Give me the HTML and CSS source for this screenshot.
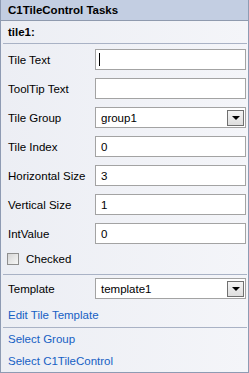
FILE: index.html
```html
<!DOCTYPE html>
<html lang="en">
<head>
    <meta charset="UTF-8">
    <title>C1TileControl Tasks</title>
    <link rel="stylesheet" href="styles.css">
</head>
<body>

<div class="panel">
    <div class="panel-header">C1TileControl Tasks</div>

    <div class="section-title">tile1:</div>
    <div class="divider"></div>

    <div class="props">
        <div class="row">
            <span class="label">Tile Text</span>
            <div class="field"><span class="caret"></span></div>
        </div>
        <div class="row">
            <span class="label">ToolTip Text</span>
            <div class="field"></div>
        </div>
        <div class="row">
            <span class="label">Tile Group</span>
            <div class="field combo">group1<span class="drop"></span></div>
        </div>
        <div class="row">
            <span class="label">Tile Index</span>
            <div class="field">0</div>
        </div>
        <div class="row">
            <span class="label">Horizontal Size</span>
            <div class="field">3</div>
        </div>
        <div class="row">
            <span class="label">Vertical Size</span>
            <div class="field">1</div>
        </div>
        <div class="row">
            <span class="label">IntValue</span>
            <div class="field">0</div>
        </div>
        <div class="check-row">
            <span class="checkbox"></span>
            <span>Checked</span>
        </div>
    </div>

    <div class="divider"></div>

    <div class="row template-row">
        <span class="label">Template</span>
        <div class="field combo">template1<span class="drop"></span></div>
    </div>
    <a class="action" href="#">Edit Tile Template</a>

    <div class="divider"></div>

    <a class="action" href="#">Select Group</a>
    <a class="action" href="#">Select C1TileControl</a>
</div>

</body>
</html>
```

FILE: styles.css
```css
body {
    margin: 0;
    font-family: "Segoe UI", "Liberation Sans", Arial, sans-serif;
    font-size: 11.5px;
    color: #000;
}
.panel {
    width: 249px;
    height: 373px;
    box-sizing: border-box;
    border: 1px solid #8e9bb3;
    border-top: none;
    background: linear-gradient(to right, #eceef4, #f4f5f9);
    display: flex;
    flex-direction: column;
}
.panel-header {
    height: 21px;
    box-sizing: border-box;
    background-color: #c3cee2;
    border-bottom: 1px solid #8f9aae;
    padding-left: 7px;
    font-weight: bold;
    line-height: 20px;
}
.section-title {
    height: 22px;
    padding-left: 7px;
    font-weight: bold;
    line-height: 23px;
}
.divider {
    height: 1px;
    margin: 0 1px 0 2px;
    background-color: #a9b2c5;
}
.props {
    padding-top: 5px;
    display: flex;
    flex-direction: column;
    gap: 8px;
}
.row {
    display: flex;
    align-items: center;
    height: 21px;
}
.label {
    width: 94px;
    padding-left: 7px;
    box-sizing: border-box;
    flex-shrink: 0;
}
.field {
    width: 151px;
    height: 21px;
    box-sizing: border-box;
    border: 1px solid #a3a3a3;
    background-color: #fff;
    padding-left: 5px;
    display: flex;
    align-items: center;
}
.caret {
    width: 1px;
    height: 13px;
    background-color: #000;
    margin-left: -2px;
}
.combo {
    justify-content: space-between;
    padding-right: 1px;
}
.drop {
    width: 17px;
    height: 16px;
    box-sizing: border-box;
    border: 1px solid #707070;
    background: linear-gradient(#f4f4f4, #dedede);
    display: flex;
    align-items: center;
    justify-content: center;
}
.drop::after {
    content: "";
    border-left: 4px solid transparent;
    border-right: 4px solid transparent;
    border-top: 4px solid #000;
    margin-top: 1px;
}
.check-row {
    display: flex;
    align-items: center;
    gap: 7px;
    height: 14px;
    padding-left: 6px;
    margin-bottom: 8px;
}
.checkbox {
    width: 12px;
    height: 12px;
    box-sizing: border-box;
    border: 1px solid #8f8f8f;
    background: linear-gradient(135deg, #d6d6d6, #f7f7f7);
}
.template-row {
    margin-top: 3px;
}
.action {
    display: block;
    padding-left: 7px;
    color: #1660c4;
    text-decoration: none;
    line-height: 16px;
}
.template-row + .action {
    margin-top: 8px;
    margin-bottom: 4px;
}
.divider + .action {
    margin-top: 3px;
}
.action + .action {
    margin-top: 6px;
}
```
